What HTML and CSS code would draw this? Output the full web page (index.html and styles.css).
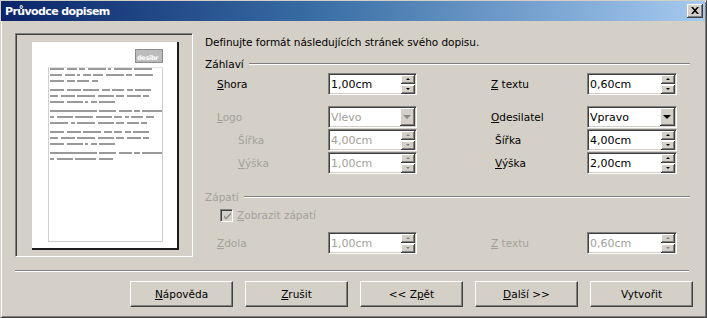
FILE: index.html
```html
<!DOCTYPE html>
<html lang="cs">
<head>
<meta charset="utf-8">
<title>Průvodce dopisem</title>
<link rel="stylesheet" href="styles.css">
</head>
<body>
<div class="window">
  <div class="titlebar">
    <span class="title">Průvodce dopisem</span>
    <span class="close"><svg width="8" height="7" viewBox="0 0 8 7"><path d="M0 0h2l2 2.2L6 0h2L5 3.5 8 7H6L4 4.8 2 7H0l3-3.5z" fill="#000"/></svg></span>
  </div>
  <div class="client">
    <div class="main">
      <div class="preview">
        <div class="page">
          <div class="logo">desibr</div>
          <div class="textarea">
            <div class="para">
              <div class="ln"><i class="f"></i><i class="d"></i><i class="b"></i><i class="h"></i><i class="a"></i><i class="h"></i><i class="h"></i></div>
              <div class="ln"><i class="e"></i><i class="d"></i><i class="a"></i><i class="c"></i><i class="d"></i><i class="h"></i><i class="b"></i><i class="h"></i></div>
              <div class="ln"><i class="f"></i><i class="c"></i><i class="e"></i><i class="b"></i></div>
            </div>
            <div class="para">
              <div class="ln"><i class="f"></i><i class="f"></i><i class="g"></i><i class="c"></i><i class="e"></i><i class="b"></i><i class="g"></i></div>
              <div class="ln"><i class="c"></i><i class="f"></i><i class="h"></i><i class="g"></i><i class="c"></i><i class="f"></i><i class="b"></i></div>
              <div class="ln"><i class="f"></i><i class="g"></i><i class="a"></i><i class="b"></i><i class="g"></i></div>
            </div>
            <div class="para">
              <div class="ln"><i class="i"></i><i class="h"></i><i class="f"></i><i class="b"></i><i class="j"></i></div>
              <div class="ln"><i class="k"></i><i class="g"></i><i class="h"></i><i class="g"></i><i class="c"></i><i class="k"></i><i class="e"></i><i class="c"></i></div>
              <div class="ln"><i class="h"></i><i class="k"></i><i class="h"></i><i class="g"></i><i class="c"></i><i class="e"></i><i class="b"></i></div>
            </div>
            <div class="para">
              <div class="ln"><i class="f"></i><i class="f"></i><i class="h"></i><i class="c"></i><i class="c"></i><i class="b"></i><i class="g"></i></div>
              <div class="ln"><i class="c"></i><i class="f"></i><i class="h"></i><i class="g"></i><i class="c"></i><i class="f"></i><i class="b"></i></div>
              <div class="ln"><i class="f"></i><i class="g"></i><i class="a"></i><i class="b"></i><i class="g"></i></div>
            </div>
            <div class="para">
              <div class="ln"><i class="i"></i><i class="h"></i><i class="f"></i><i class="b"></i><i class="j"></i></div>
              <div class="ln"><i class="k"></i><i class="g"></i><i class="j"></i><i class="f"></i></div>
            </div>
          </div>
        </div>
      </div>

      <div class="form">
        <div class="intro">Definujte formát následujících stránek svého dopisu.</div>

        <div class="legend hdr"><span>Záhlaví</span><span class="groove"></span></div>

        <div class="row r1">
          <span class="lbl"><u>S</u>hora</span>
          <div class="field"><span class="val">1,00cm</span><span class="spin"><span class="sb up"></span><span class="sb dn"></span></span></div>
          <span></span>
          <span class="lbl"><u>Z</u> textu</span>
          <div class="field"><span class="val">0,60cm</span><span class="spin"><span class="sb up"></span><span class="sb dn"></span></span></div>
        </div>

        <div class="row r2">
          <span class="lbl dis"><u>L</u>ogo</span>
          <div class="field dis"><span class="val">Vlevo</span><span class="dd"></span></div>
          <span></span>
          <span class="lbl"><u>O</u>desilatel</span>
          <div class="field"><span class="val">Vpravo</span><span class="dd"></span></div>
        </div>

        <div class="row r3">
          <span class="lbl sub dis">Šířka</span>
          <div class="field dis"><span class="val">4,00cm</span><span class="spin"><span class="sb up"></span><span class="sb dn"></span></span></div>
          <span></span>
          <span class="lbl rsub">Šířka</span>
          <div class="field"><span class="val">4,00cm</span><span class="spin"><span class="sb up"></span><span class="sb dn"></span></span></div>
        </div>

        <div class="row r3">
          <span class="lbl sub dis"><u>V</u>ýška</span>
          <div class="field dis"><span class="val">1,00cm</span><span class="spin"><span class="sb up"></span><span class="sb dn"></span></span></div>
          <span></span>
          <span class="lbl rsub"><u>V</u>ýška</span>
          <div class="field"><span class="val">2,00cm</span><span class="spin"><span class="sb up"></span><span class="sb dn"></span></span></div>
        </div>

        <div class="legend ftr dis"><span>Zápatí</span><span class="groove"></span></div>

        <div class="check dis">
          <span class="box"><svg width="9" height="9" viewBox="0 0 9 9"><path d="M1 3.5l2 2 5-5v2l-5 5-2-2z" fill="#8c8a86"/></svg></span>
          <span><u>Z</u>obrazit zápatí</span>
        </div>

        <div class="row r5">
          <span class="lbl dis"><u>Z</u>dola</span>
          <div class="field dis"><span class="val">1,00cm</span><span class="spin"><span class="sb up"></span><span class="sb dn"></span></span></div>
          <span></span>
          <span class="lbl dis"><u>Z</u> textu</span>
          <div class="field dis"><span class="val">0,60cm</span><span class="spin"><span class="sb up"></span><span class="sb dn"></span></span></div>
        </div>
      </div>
    </div>

    <div class="sep"></div>

    <div class="buttons">
      <span class="btn"><u>N</u>ápověda</span>
      <span class="btn"><u>Z</u>rušit</span>
      <span class="btn">&lt;&lt; Z<u>p</u>ět</span>
      <span class="btn"><u>D</u>alší &gt;&gt;</span>
      <span class="btn">Vytvořit</span>
    </div>
  </div>
</div>
</body>
</html>
```
FILE: styles.css
```css
* { box-sizing: border-box; }
html, body { margin: 0; padding: 0; background: #d4d0c8; }
body {
  font-family: "DejaVu Sans", sans-serif;
  font-size: 10.5px;
  color: #000;
}
u { text-decoration: underline; text-underline-offset: 1px; }

.window {
  width: 707px;
  height: 318px;
  background: #d4d0c8;
  border: 1px solid;
  border-color: #d4d0c8 #404040 #404040 #d4d0c8;
  box-shadow: inset 1px 1px 0 #fff, inset -1px -1px 0 #808080;
  display: flex;
  flex-direction: column;
  overflow: hidden;
}

.titlebar {
  height: 20px;
  margin: 0 1px 0 0;
  background: linear-gradient(to right, #0a246a 0%, #3a6ea5 45%, #a6caf0 100%);
  display: flex;
  align-items: center;
  justify-content: space-between;
  padding: 0 2px 0 4px;
}
.title {
  color: #fff;
  font-weight: bold;
  font-size: 11px;
  letter-spacing: -0.6px;
}
.close {
  width: 16px;
  height: 14px;
  background: #d4d0c8;
  box-shadow: inset -1px -1px 0 #404040, inset 1px 1px 0 #fff, inset -2px -2px 0 #808080;
  display: flex;
  align-items: center;
  justify-content: center;
  padding: 0 1px 1px 0;
}

.client {
  flex: 1;
  display: flex;
  flex-direction: column;
}

.main {
  display: flex;
  padding: 12px 0 0 14px;
}

/* preview */
.preview {
  width: 178px;
  height: 224px;
  border: 1px solid;
  border-color: #808080 #fff #fff #808080;
  box-shadow: inset 1px 1px 0 #404040;
  padding: 8px 0 0 16px;
}
.page {
  width: 147px;
  height: 208px;
  background: #fff;
  border-right: 2px solid #1c1c1c;
  border-bottom: 2px solid #1c1c1c;
  padding: 7px 0 0 16px;
  display: flex;
  flex-direction: column;
  align-items: flex-start;
}
.logo {
  align-self: flex-end;
  margin-right: 14px;
  width: 28px;
  height: 14px;
  background: #bcbcbc;
  border: 1px solid #8a8a8a;
  color: #fff;
  font-size: 6.5px;
  line-height: 7px;
  font-weight: bold;
  letter-spacing: -0.3px;
  padding: 5px 0 0 1px;
  white-space: nowrap;
}
.textarea {
  margin-top: 4px;
  width: 115px;
  height: 175px;
  border: 1px solid #cfcfcf;
  border-top-color: #e4e4e4;
  padding: 0 0 0 1px;
}
.para { margin-bottom: 3px; }
.ln {
  height: 6px;
  display: flex;
  gap: 2.5px;
  align-items: flex-start;
}
.ln i {
  display: block;
  height: 2px;
  background: #9a9a9a;
}
.ln .a { width: 3px; }
.ln .k { width: 4px; }
.ln .b { width: 6px; }
.ln .c { width: 8px; }
.ln .d { width: 10px; }
.ln .e { width: 12px; }
.ln .f { width: 14px; }
.ln .g { width: 16px; }
.ln .h { width: 18px; }
.ln .j { width: 21px; }
.ln .i { width: 50px; }

/* form */
.form {
  width: 485px;
  margin-left: 12px;
  display: flex;
  flex-direction: column;
}
.intro { margin-top: 3px; line-height: 13px; letter-spacing: -0.05px; }

.legend {
  display: flex;
  align-items: center;
  line-height: 12px;
}
.legend .groove {
  flex: 1;
  height: 2px;
  border-top: 1px solid #808080;
  border-bottom: 1px solid #fff;
  margin-left: 5px;
}
.hdr { margin-top: 9px; }
.ftr { margin-top: 17px; }

.row {
  display: grid;
  grid-template-columns: 123px 89px 62px 108px 90px;
  height: 22px;
  align-items: center;
}
.r1 { margin-top: 3px; }
.r2 { margin-top: 11px; }
.r3 { margin-top: 1px; }
.r5 { margin-top: 10px; }

.lbl { padding-left: 12px; }
.lbl.sub { padding-left: 33px; }
.lbl.rsub { padding-left: 16px; }
.dis { color: #a3a09b; }

.field {
  position: relative;
  height: 22px;
  background: #fff;
  border: 1px solid;
  border-color: #808080 #fff #fff #808080;
  box-shadow: inset 1px 1px 0 #404040, inset -1px -1px 0 #d4d0c8;
  display: flex;
  align-items: center;
  justify-content: space-between;
  padding: 1px 1px 1px 2px;
  font-size: 11px;
  color: #000;
}
.field.dis { color: #a3a09b; }
.val { padding-top: 1px; }

.spin {
  display: flex;
  flex-direction: column;
  width: 14px;
  height: 19px;
  gap: 1px;
}
.sb {
  flex: 1;
  background: #d4d0c8;
  box-shadow: inset -1px -1px 0 #404040, inset 1px 1px 0 #fff, inset -2px -2px 0 #808080;
  display: flex;
  align-items: center;
  justify-content: center;
  padding: 0 1px 1px 0;
}
.sb::after {
  content: "";
  width: 0;
  height: 0;
  border-left: 2px solid transparent;
  border-right: 2px solid transparent;
}
.sb.up::after { border-bottom: 2px solid #000; }
.sb.dn::after { border-top: 2px solid #000; }
.dis .sb.up::after { border-bottom-color: #808080; }
.dis .sb.dn::after { border-top-color: #808080; }

.dd {
  width: 15px;
  height: 18px;
  background: #d4d0c8;
  box-shadow: inset -1px -1px 0 #404040, inset 1px 1px 0 #fff, inset -2px -2px 0 #808080;
  display: flex;
  align-items: center;
  justify-content: center;
  padding: 0 1px 1px 0;
}
.dd::after {
  content: "";
  width: 0;
  height: 0;
  border-left: 4px solid transparent;
  border-right: 4px solid transparent;
  border-top: 4px solid #000;
}
.dis .dd::after { border-top-color: #8c8a86; }

.check {
  margin-top: 6px;
  margin-left: 15px;
  display: flex;
  align-items: center;
  gap: 4px;
  line-height: 13px;
}
.box {
  width: 13px;
  height: 13px;
  border: 1px solid;
  border-color: #808080 #fff #fff #808080;
  box-shadow: inset 1px 1px 0 #404040, inset -1px -1px 0 #d4d0c8;
  background: #d4d0c8;
  display: flex;
  align-items: center;
  justify-content: center;
  padding: 1px 0 0 1px;
}

.sep {
  margin: 13px 17px 0 14px;
  height: 2px;
  border-top: 1px solid #808080;
  border-bottom: 1px solid #fff;
}

.buttons {
  display: flex;
  justify-content: flex-end;
  gap: 12px;
  margin-top: 9px;
  padding-right: 13px;
}
.btn {
  width: 103px;
  height: 26px;
  display: flex;
  align-items: center;
  justify-content: center;
  background: #d4d0c8;
  border: 1px solid;
  border-color: #fff #404040 #404040 #fff;
  box-shadow: inset -1px -1px 0 #808080;
}
```
